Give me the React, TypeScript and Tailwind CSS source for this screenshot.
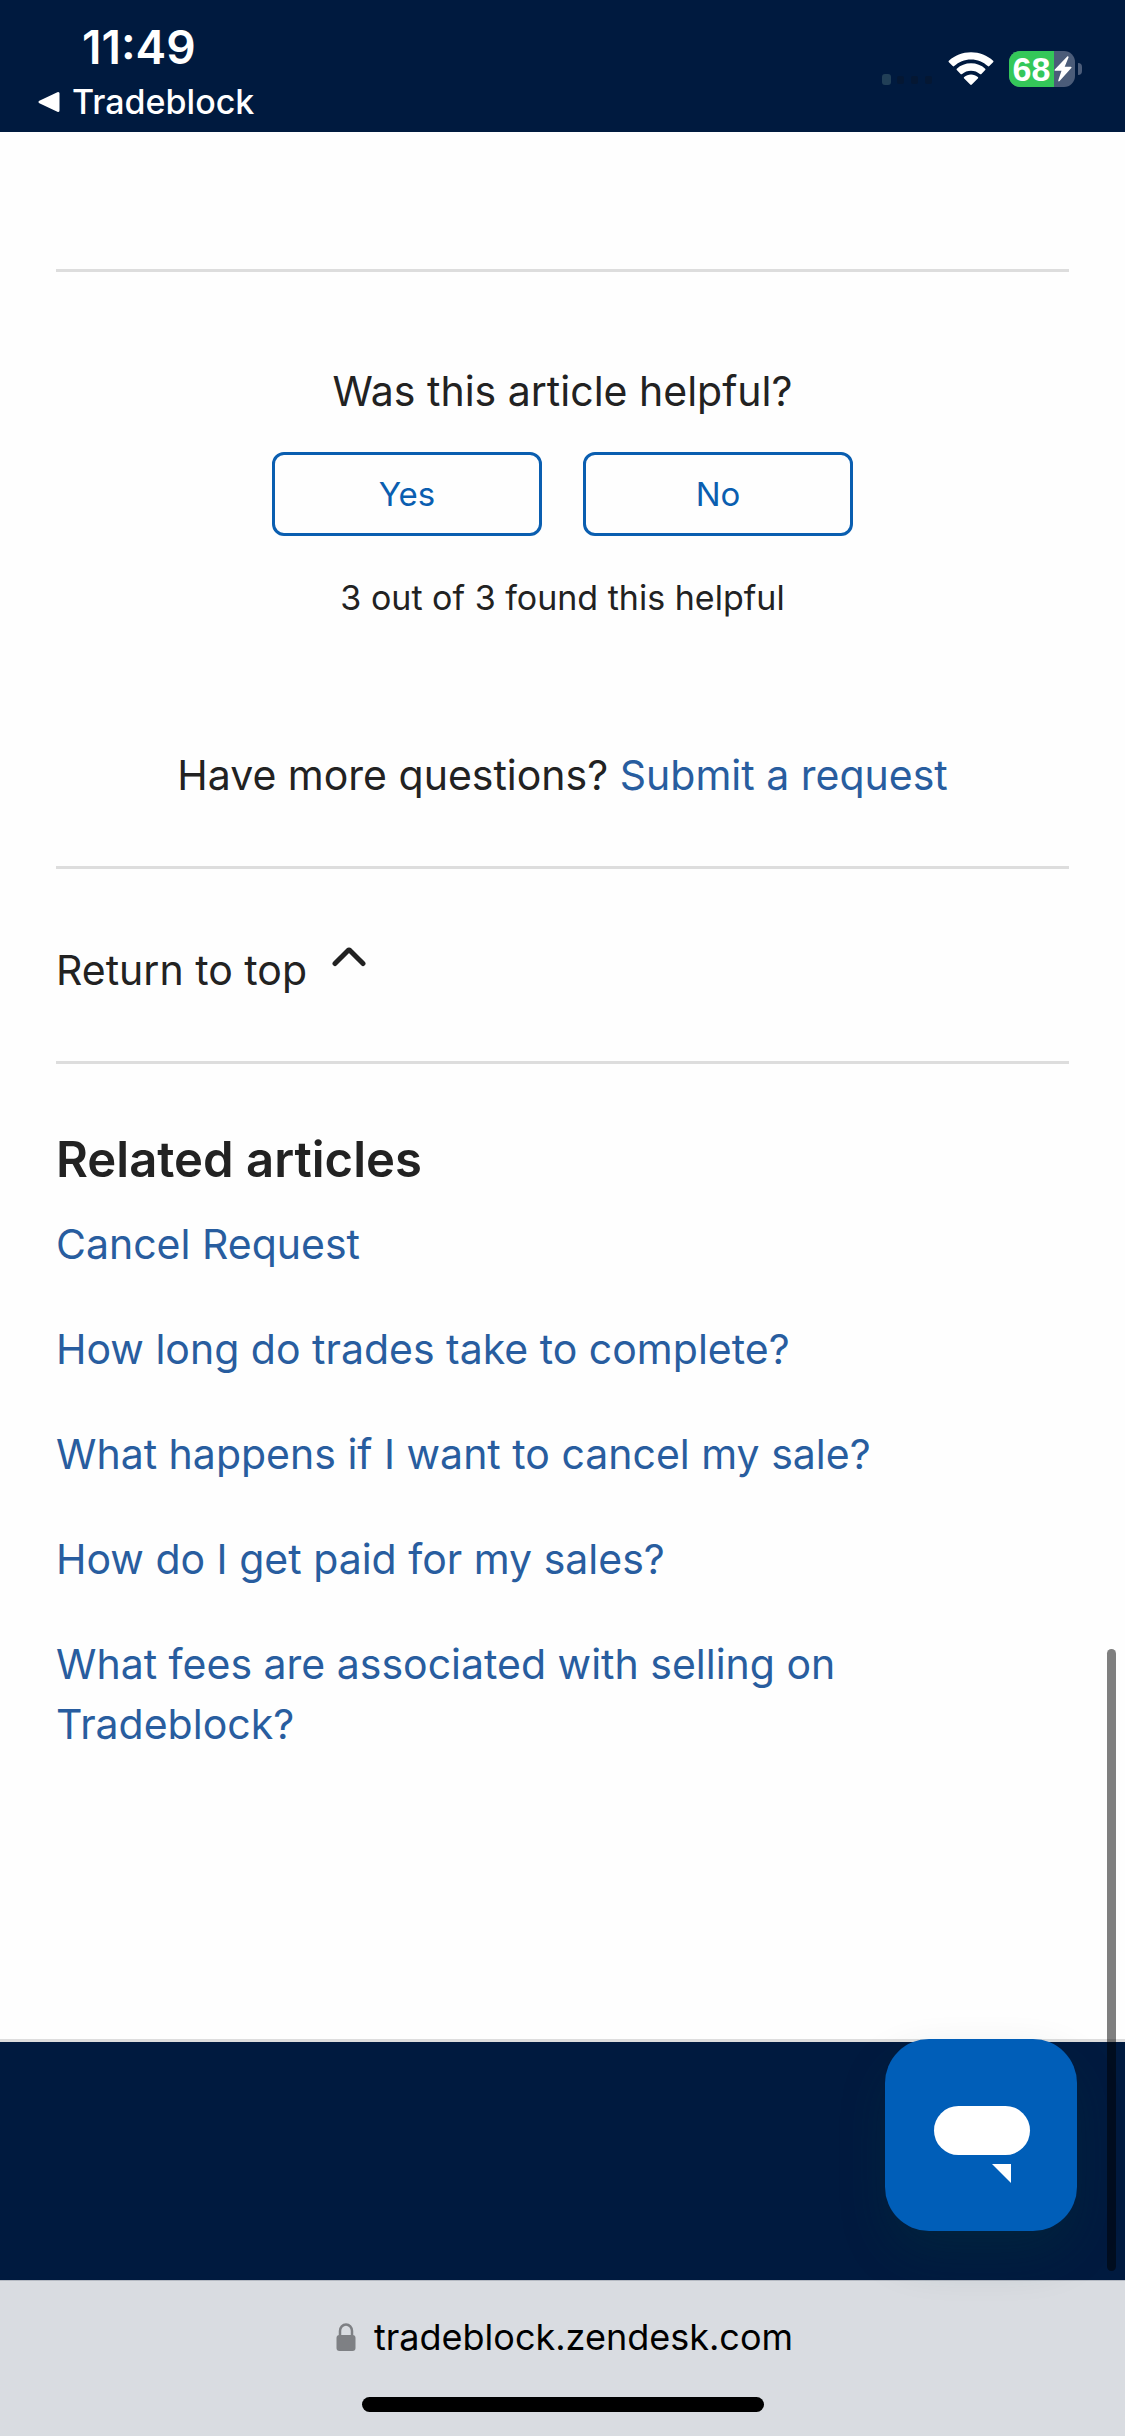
const relatedArticles = [
    'Cancel Request',
    'How long do trades take to complete?',
    'What happens if I want to cancel my sale?',
    'How do I get paid for my sales?',
    'What fees are associated with selling on Tradeblock?',
];

function StatusBar() {
    return (
        <header className="flex h-[132px] items-start justify-between bg-[#001a3f] pl-9 pr-[43px] text-white">
            <div className="pt-[23px]">
                <div className="pl-[46px] text-[46px] leading-[48px] font-semibold">11:49</div>
                <a href="#app" className="mt-[9px] flex items-center gap-3 text-[34px] leading-[44px] font-medium">
                    <svg viewBox="0 0 24 24" className="size-6" fill="currentColor" stroke="currentColor" strokeWidth="3" strokeLinejoin="round">
                        <path d="M4 12 22 3.5v17z" />
                    </svg>
                    Tradeblock
                </a>
            </div>
            <div className="flex items-center pt-[51px]">
                <svg viewBox="0 0 56 36" className="mr-2.5 h-9 w-14">
                    <rect x="0" y="23" width="9" height="11" rx="3" fill="#213f57" />
                    <rect x="15" y="25" width="7" height="8" rx="2" fill="#041733" />
                    <rect x="29" y="25" width="7" height="8" rx="2" fill="#041733" />
                    <rect x="43" y="25" width="7" height="8" rx="2" fill="#041733" />
                </svg>
                <svg viewBox="0 0 46 34" className="mr-[15px] h-[34px] w-[46px]" fill="currentColor">
                    <path d="M23 7.5c6.5 0 12.4 2.5 16.8 6.6.5.4 1.100.4 1.5 0l3.8-3.8c.5-.5.5-1.100 0-1.5C39.300 3.500 31.500.3 23 .3S6.700 3.500.9 8.800c-.5.4-.5 1 0 1.500l3.8 3.800c.4.400 1 .4 1.500 0C10.600 10 16.500 7.500 23 7.500z" />
                    <path d="M23 18.700c3.400 0 6.500 1.200 8.900 3.300.5.400 1.100.4 1.500 0l3.800-3.900c.4-.4.400-1 0-1.400C33.400 13.300 28.400 11.300 23 11.300s-10.400 2-14.200 5.400c-.4.400-.4 1 0 1.400l3.800 3.900c.4.400 1 .4 1.500 0 2.400-2.100 5.500-3.300 8.900-3.300z" />
                    <path d="M29.800 25c.5.400.5 1.100 0 1.500l-6 6.100c-.5.500-1.100.5-1.600 0l-6-6.100c-.5-.4-.5-1.100 0-1.500 1.900-1.500 4.200-2.400 6.800-2.400s4.900.9 6.800 2.400z" />
                </svg>
                <div className="flex h-9 w-[66px] items-center overflow-hidden rounded-[11px] bg-[#4b5c79]">
                    <div className="flex h-full w-[45px] items-center justify-center bg-[#34c759] font-['Liberation_Sans',sans-serif] text-[34px] leading-9 font-bold">
                        68
                    </div>
                    <svg viewBox="0 0 18 26" className="h-[26px] w-[18px]" fill="currentColor">
                        <path d="M13.200.6.800 13.600c-.5.600-.2 1.200.5 1.200h6.200L4.300 24.300c-.3 1 .6 1.500 1.300.8L17.300 12c.5-.6.200-1.200-.5-1.200h-6.100l3.800-9.400c.3-.9-.600-1.500-1.300-.8z" />
                    </svg>
                </div>
                <div className="ml-[3px] h-3 w-1 rounded-r-full bg-[#4b5c79]" />
            </div>
        </header>
    );
}

function VoteButton({ label }: { label: string }) {
    return (
        <button className="h-[84px] w-[270px] rounded-xl border-3 border-[#0a5eb0] text-[33px] leading-[40px] text-[#0a5eb0]">
            {label}
        </button>
    );
}

export default function App() {
    return (
        <div className="relative flex min-h-screen flex-col overflow-hidden bg-[#fefefe] font-['Inter',sans-serif] text-[#222222]">
            <StatusBar />

            <main className="flex grow flex-col border-b-3 border-[#dddddd] px-14 pt-[137px] text-[41px] leading-[60px]">
                <section className="flex flex-col items-center border-y-3 border-[#dddddd] pt-[89px] pb-[61px]">
                    <p>Was this article helpful?</p>
                    <div className="mt-[31px] flex gap-[41px]">
                        <VoteButton label="Yes" />
                        <VoteButton label="No" />
                    </div>
                    <p className="mt-[37px] text-[34px] leading-[50px]">3 out of 3 found this helpful</p>
                    <p className="mt-[122px]">
                        Have more questions?{' '}
                        <a href="#request" className="text-[#285d9f]">Submit a request</a>
                    </p>
                </section>

                <div className="border-b-3 border-[#dddddd] pt-[77px] pb-[67px]">
                    <a href="#top" className="flex h-12 items-center gap-[25px]">
                        Return to top
                        <svg viewBox="0 0 34 20" className="mb-[27px] h-5 w-[34px]" fill="none" stroke="currentColor" strokeWidth="5" strokeLinecap="round" strokeLinejoin="round">
                            <path d="M3 16.500 15.800 3.700q1.200-1 2.400 0L31 16.500" />
                        </svg>
                    </a>
                </div>

                <section className="pt-[66px] pb-[280px]">
                    <h2 className="text-[49px] leading-[60px] font-semibold">Related articles</h2>
                    <ul className="mt-6 flex flex-col gap-[45px]">
                        {relatedArticles.map((title) => (
                            <li key={title}>
                                <a href="#article" className="text-[#285d9f]">{title}</a>
                            </li>
                        ))}
                    </ul>
                </section>
            </main>

            <footer className="h-[238px] bg-[#001a3f]" />

            <div className="flex h-[156px] flex-col items-center border-t border-[#b4b9c2] bg-[#d9dce1] text-black">
                <div className="mt-8 flex items-center gap-[18px] pl-1 text-[36px] leading-[48px]">
                    <svg viewBox="0 0 20 28" className="h-7 w-5">
                        <rect x="0.500" y="12" width="19" height="16" rx="3" fill="#7e8084" />
                        <path d="M4 13V8a6 6.500 0 0 1 12 0v5" fill="none" stroke="#7e8084" strokeWidth="2.500" />
                    </svg>
                    tradeblock.zendesk.com
                </div>
                <div className="mt-9 h-[15px] w-[402px] rounded-full bg-black" />
            </div>

            <button aria-label="Open chat" className="absolute right-12 bottom-[205px] size-48 rounded-[44px] bg-[#005eb8] shadow-[0_24px_50px_-6px_rgba(3,60,60,0.3)]">
                <svg viewBox="0 0 192 192" className="size-full" fill="#ffffff">
                    <rect x="49" y="67" width="96" height="49" rx="24.500" />
                    <path d="M107 125h19v19z" />
                </svg>
            </button>
            <div className="absolute right-[9px] bottom-[165px] h-[622px] w-[9px] rounded-full bg-black/50" />
        </div>
    );
}
